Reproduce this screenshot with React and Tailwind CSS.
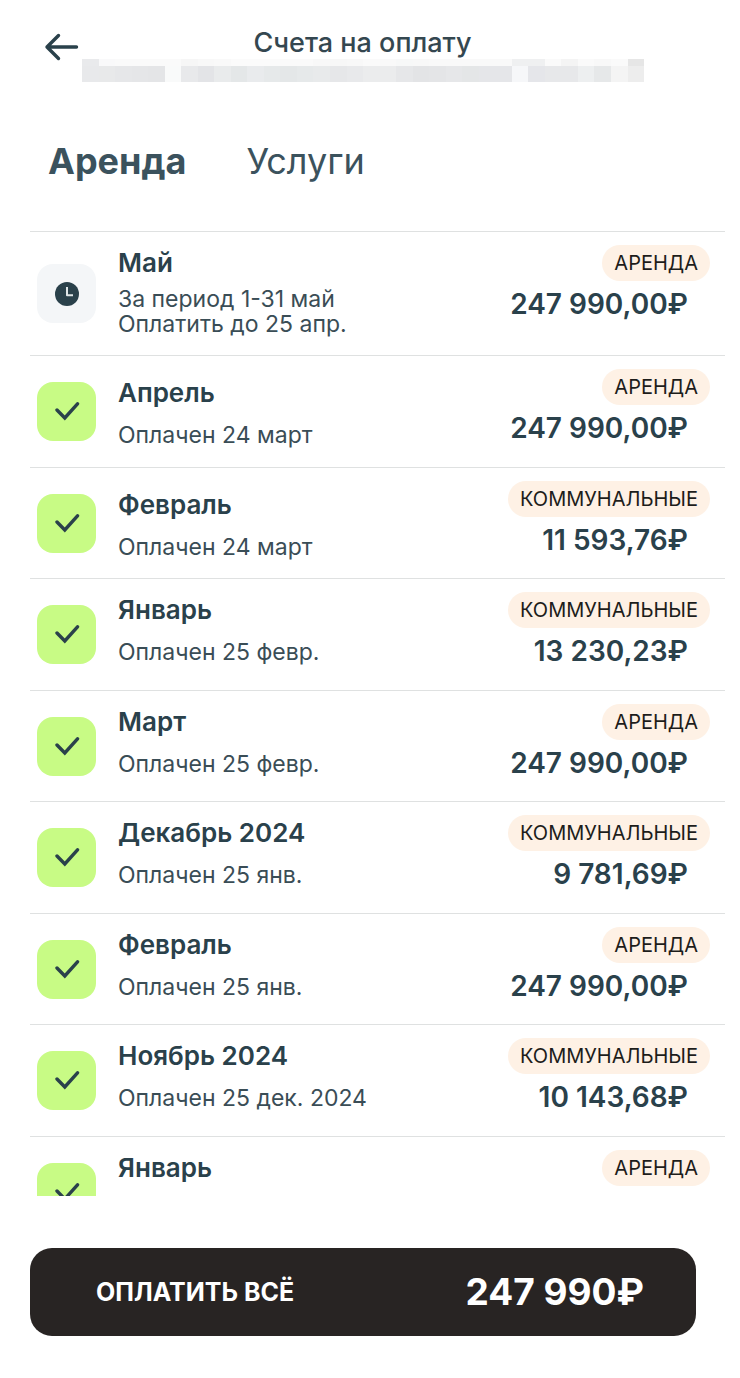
const mosaicTop = ['#e9eaec','#f9f9fa','#fafafa','#fafafa','#fafafa','#fafafa','#f6f6f6','#f8f8f8','#f9f9f9','#fbfbfb','#fbfbfb','#fbfbfb','#fafafa','#fafafa','#f8f8f8','#f7f7f7','#f8f8f8','#fafafa','#f9f9f9','#f7f8f8','#f8f8f8','#f9f9f9','#f9f9f9','#f9f9f9','#f9f9f9','#f9f9f9','#eff0f1','#eff0f1','#fafafa','#f4f4f4','#fafafa','#f8f8f8','#fafafa','#e6e6e6']
const mosaicBottom = ['#e8e9eb','#e8e9ea','#e6e7e9','#e5e6e8','#e4e5e7','#f9fafa','#e8e9eb','#e3e4e7','#e9ebec','#e4e7e8','#e9ebed','#e6e9ea','#e4e7e8','#e6e9ea','#e8eaeb','#e6e7e9','#e8e9eb','#ebeced','#ebeced','#e6e7e9','#e3e4e6','#e4e5e7','#e6e7e9','#e4e6e7','#e5e6e9','#e5e6e9','#f6f7f9','#e5e6ea','#e7e8ea','#e7e8ea','#edeff0','#e6e8e9','#f4f4f4','#ededed']

const invoices = [
  { title: 'Май', lines: ['За период 1-31 май', 'Оплатить до 25 апр.'], tag: 'АРЕНДА', amount: '247 990,00₽', layout: 'due' },
  { title: 'Апрель', lines: ['Оплачен 24 март'], tag: 'АРЕНДА', amount: '247 990,00₽', layout: 'low' },
  { title: 'Февраль', lines: ['Оплачен 24 март'], tag: 'КОММУНАЛЬНЫЕ', amount: '11 593,76₽', layout: 'low' },
  { title: 'Январь', lines: ['Оплачен 25 февр.'], tag: 'КОММУНАЛЬНЫЕ', amount: '13 230,23₽' },
  { title: 'Март', lines: ['Оплачен 25 февр.'], tag: 'АРЕНДА', amount: '247 990,00₽' },
  { title: 'Декабрь 2024', lines: ['Оплачен 25 янв.'], tag: 'КОММУНАЛЬНЫЕ', amount: '9 781,69₽' },
  { title: 'Февраль', lines: ['Оплачен 25 янв.'], tag: 'АРЕНДА', amount: '247 990,00₽' },
  { title: 'Ноябрь 2024', lines: ['Оплачен 25 дек. 2024'], tag: 'КОММУНАЛЬНЫЕ', amount: '10 143,68₽' },
  { title: 'Январь', lines: [], tag: 'АРЕНДА' },
]

function Mosaic({ colors, className }) {
  return (
    <div className={`flex ${className}`}>
      {colors.map((c, i) => (
        <span key={i} className="flex-1" style={{ backgroundColor: c }} />
      ))}
    </div>
  )
}

function ClockTile() {
  return (
    <div className="mt-8 flex size-[59px] shrink-0 items-center justify-center rounded-[16px] bg-[#f4f6f8]">
      <svg viewBox="0 0 24 24" className="size-6" aria-hidden="true">
        <circle cx="12" cy="12" r="12" fill="#2a414b" />
        <path d="M12 5V13.2H18" fill="none" stroke="#dfe6e8" strokeWidth="2" strokeLinejoin="round" />
      </svg>
    </div>
  )
}

function CheckTile() {
  return (
    <div className="mt-[26px] flex size-[59px] shrink-0 items-center justify-center rounded-[16px] bg-[#c8fb85]">
      <svg viewBox="0 0 26 20" className="h-5 w-[26px]" fill="none" aria-hidden="true">
        <path d="M3 8L10.8 16L23.5 1.8" stroke="#2a414b" strokeWidth="3.4" strokeLinecap="round" />
      </svg>
    </div>
  )
}

function Invoice({ title, lines, tag, amount, layout }) {
  const due = layout === 'due'
  const low = layout === 'low'
  return (
    <li className={`flex items-start border-t border-[#dfe1e1] pl-[7px] pr-[15px] ${due ? 'min-h-[124px]' : 'min-h-[111px] even:min-h-[112px]'}`}>
      {due ? <ClockTile /> : <CheckTile />}
      <div className={`ml-[22px] min-w-0 flex-1 ${low ? 'pt-[21px]' : 'pt-[15px]'}`}>
        <h2 className="text-[26px] leading-8 font-semibold text-[#2a414b]">{title}</h2>
        <div className={`text-[23px] leading-[25px] text-[#3a4d56] ${due ? 'mt-2' : 'mt-[14px]'}`}>
          {lines.map((line) => <p key={line}>{line}</p>)}
        </div>
      </div>
      <div className="flex flex-col items-end pt-[13px]">
        <span className="rounded-full bg-[#fef1e5] px-3 text-[20px] leading-9 text-[#1d1d1b]">{tag}</span>
        {amount && <strong className="mt-[5px] mr-[22px] text-[28px] leading-9 font-semibold text-[#2a414b]">{amount}</strong>}
      </div>
    </li>
  )
}

export default function App() {
  return (
    <main className="flex h-screen flex-col bg-white pr-[15px] pl-[30px] font-['Inter','Noto_Sans',sans-serif]">
      <header className="relative h-[90px] shrink-0 pt-[27px]">
        <button type="button" aria-label="Назад" className="absolute top-[32px] left-[14px]">
          <svg viewBox="0 0 36 30" className="h-[30px] w-9" fill="none" stroke="#2a414b" strokeWidth="3.4" strokeLinecap="round" strokeLinejoin="round" aria-hidden="true">
            <path d="M32.5 15H3M14.5 3.5L3 15L14.5 26.5" />
          </svg>
        </button>
        <h1 className="pr-[30px] text-center text-[27px] leading-8 font-medium text-[#344750]">Счета на оплату</h1>
        <div className="mr-[81px] ml-[52px]" aria-hidden="true">
          <Mosaic colors={mosaicTop} className="h-[7px]" />
          <Mosaic colors={mosaicBottom} className="h-4" />
        </div>
      </header>
      <nav className="flex h-[141px] shrink-0 items-center gap-[60px] pl-[18px] text-[36px] leading-[44px] text-[#3b525d]">
        <a href="#rent" className="font-bold">Аренда</a>
        <a href="#services">Услуги</a>
      </nav>
      <ul className="min-h-0 flex-1 overflow-y-auto [scrollbar-width:none]">
        {invoices.map((invoice, i) => <Invoice key={i} {...invoice} />)}
      </ul>
      <footer className="shrink-0 pt-[52px] pr-[29px] pb-[42px]">
        <button type="button" className="flex h-[88px] w-full items-center justify-between rounded-[22px] bg-[#282423] pr-[52px] pl-[66px] font-bold text-white">
          <span className="text-[25px] leading-8">ОПЛАТИТЬ ВСЁ</span>
          <span className="text-[37px] leading-[44px]">247 990₽</span>
        </button>
      </footer>
    </main>
  )
}
